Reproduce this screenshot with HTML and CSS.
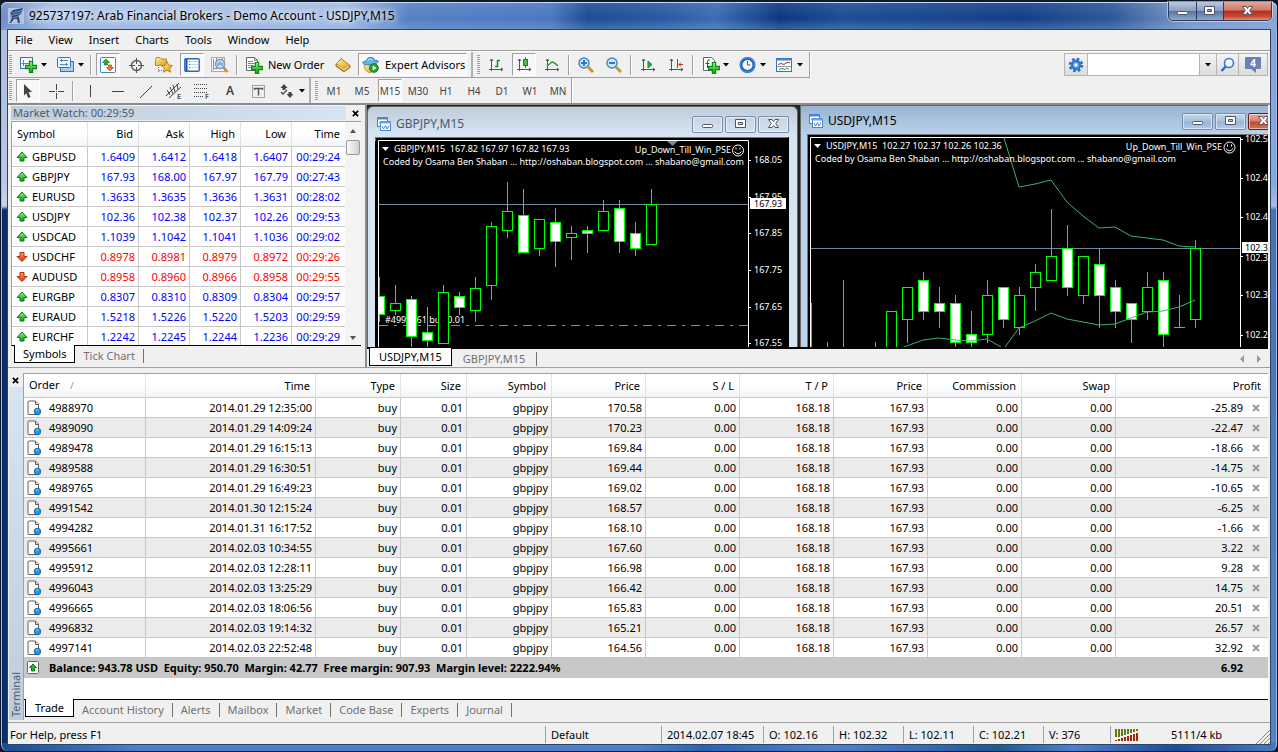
FILE: index.html
```html
<!DOCTYPE html>
<html lang="en">
<head>
<meta charset="utf-8">
<title>925737197: Arab Financial Brokers - Demo Account - USDJPY,M15</title>
<link rel="stylesheet" href="styles.css">
</head>
<body>
<svg class="defs" aria-hidden="true">
  <defs>
    <linearGradient id="gold" x1="0" y1="0" x2="1" y2="1"><stop offset="0" stop-color="#fff2a0"/><stop offset="1" stop-color="#d99a18"/></linearGradient>
    <linearGradient id="green" x1="0" y1="0" x2="0" y2="1"><stop offset="0" stop-color="#8df57e"/><stop offset="1" stop-color="#0a9c0a"/></linearGradient>
    <linearGradient id="red" x1="0" y1="0" x2="0" y2="1"><stop offset="0" stop-color="#ff9a5a"/><stop offset="1" stop-color="#d83a08"/></linearGradient>
    <symbol id="up" viewBox="0 0 12 12"><path d="M6 1 11 6.500H8V10H4V6.500H1Z" fill="url(#green)" stroke="#0b7a1c"/></symbol>
    <symbol id="down" viewBox="0 0 12 12"><path d="M6 10.500 11 5.500H8V1.500H4V5.500H1Z" fill="url(#red)" stroke="#b03010"/></symbol>
    <symbol id="doc" viewBox="0 0 16 16"><path d="M1 2Q1 1 2 1H8.500L11.500 4V14.500H2Q1 14.500 1 13.500Z" fill="#fbfbfb" stroke="#606060"/><path d="M8.500 1V4.500H11.500" fill="#ddd" stroke="#606060"/><circle cx="10.500" cy="11.500" r="3.200" fill="#1e9be8" stroke="#0d5f9e"/><path d="M9 10.500Q10 9.200 11.500 9.800" stroke="#a8defa" fill="none"/></symbol>
    <symbol id="plus" viewBox="0 0 11 11"><path d="M4 .500H7V4H10.500V7H7V10.500H4V7H.500V4H4Z" fill="url(#green)" stroke="#078a12"/></symbol>
    <symbol id="caret" viewBox="0 0 6 4"><path d="M0 0H6L3 3.500Z" fill="#000"/></symbol>
    <symbol id="axes" viewBox="0 0 16 16"><path d="M3.500 2V14M1 12.500H15M2 4 3.500 2 5 4M13 11 15 12.500 13 14" fill="none" stroke="#555"/></symbol>
    <symbol id="win" viewBox="0 0 14 14"><rect x=".500" y=".500" width="10" height="9" fill="#fff" stroke="#4a86d8"/><path d="M0 1.500H11" stroke="#4a86d8" stroke-width="2"/><path d="M2 6 4 4 5 6" fill="none" stroke="#4a86d8"/><rect x="3.500" y="4.500" width="10" height="9" fill="#fff" stroke="#4a86d8"/><path d="M3 5.500H14" stroke="#6aa4ec" stroke-width="2"/><path d="M5 9 6.500 12 8.500 8.500 10 12 12 8.500" fill="none" stroke="#4a86d8"/></symbol>
    <symbol id="min" viewBox="0 0 14 12"><rect x="1.500" y="6.500" width="10" height="3" rx="1" fill="#fff" stroke="#4f5468"/></symbol>
    <symbol id="max" viewBox="0 0 14 12"><path fill-rule="evenodd" d="M1.500 1.500H11.500V9.500H1.500ZM4.500 4.500V6.500H8.500V4.500Z" fill="#fff" stroke="#4f5468"/></symbol>
    <symbol id="close" viewBox="0 0 14 12"><path d="M1.500 1.500H5L6.500 3.500 8 1.500H11.500L8.700 5.500 11.500 9.500H8L6.500 7.500 5 9.500H1.500L4.300 5.500Z" fill="#fff" stroke="#4f5468"/></symbol>
    <symbol id="x" viewBox="0 0 8 8"><path d="M1 1 7 7M7 1 1 7" stroke="currentColor" stroke-width="2"/></symbol>
  </defs>
</svg>

<div class="frame">
  <header class="titlebar">
    <svg class="i16" viewBox="0 0 16 16"><path d="M2 5 5 2 15 0 14 3 13 6 10 8 11 9 12 15H10L9 11 6 11 3 15H1L4 10Z" fill="#274a80"/><path d="M4 5 14 2.500M3 7.500 13 5M5 10 10 8.500M2.500 5V14" stroke="#8ea6cc" stroke-width=".8" fill="none"/></svg>
    <h1 class="title">925737197: Arab Financial Brokers - Demo Account - USDJPY,M15</h1>
    <div class="winctl">
      <button class="wc wc-min" aria-label="Minimize"><svg class="ctl"><use href="#min"/></svg></button>
      <button class="wc wc-max" aria-label="Maximize"><svg class="ctl"><use href="#max"/></svg></button>
      <button class="wc wc-close" aria-label="Close"><svg class="ctl"><use href="#close"/></svg></button>
    </div>
  </header>

  <div class="client">
    <nav class="menu">
      <button>File</button><button>View</button><button>Insert</button><button>Charts</button><button>Tools</button><button>Window</button><button>Help</button>
    </nav>

    <div class="bars">
      <div class="bars-left">
        <div class="toolbar toolbar-main">
          <i class="grip"></i>
          <button class="tb dd" aria-label="New chart"><svg class="i18" viewBox="0 0 18 18"><rect x=".500" y="1.500" width="12" height="11" fill="#f4f9ff" stroke="#3a72b4"/><path d="M3.500 4V10M1.500 7.500H11M9.500 4V7" stroke="#5b87b8"/><use href="#plus" x="5" y="5" width="12" height="12"/></svg><svg class="car"><use href="#caret"/></svg></button>
          <button class="tb dd" aria-label="Profiles"><svg class="i18" viewBox="0 0 18 18"><rect x="3.500" y="5.500" width="13" height="10" fill="#a9ccf0" stroke="#3a72b4"/><rect x=".500" y="1.500" width="13" height="10" rx="1" fill="#eef6ff" stroke="#3a72b4"/><path d="M3 4.500H11M3 8.500H11M4.500 3V6M9.500 7V10" stroke="#5b87b8"/></svg><svg class="car"><use href="#caret"/></svg></button>
          <i class="sep"></i>
          <button class="tb on" aria-label="Market Watch"><svg class="i16" viewBox="0 0 16 16"><rect x=".500" y=".500" width="15" height="15" rx="1" fill="#fff" stroke="#3f82c8"/><path d="M6 2 9.500 5.500H7.500V8H4.500V5.500H2.500Z" fill="#28b428" stroke="#0b7a1c" stroke-width=".7"/><path d="M10 14 13.500 10.500H11.500V8H8.500V10.500H6.500Z" fill="#f07838" stroke="#c04010" stroke-width=".7"/></svg></button>
          <button class="tb" aria-label="Data Window"><svg class="i16" viewBox="0 0 16 16"><circle cx="8.500" cy="8.500" r="5" fill="none" stroke="#555" stroke-width="1.300"/><path d="M8.500 1V7M8.500 10V16M1 8.500H7M10 8.500H16" stroke="#555"/></svg></button>
          <button class="tb" aria-label="Navigator"><svg class="i18" viewBox="0 0 18 18"><path d="M.500 3.500Q.500 1.500 2 1.500H5L6.500 3H11.500V9.500H.500Z" fill="url(#gold)" stroke="#c08a18"/><path d="M3.500 11V17M4 14.500H8" stroke="#777" stroke-dasharray="1 1"/><path d="M12 5.500 13.700 9.200 17.500 9.600 14.700 12.200 15.500 16.200 12 14.200 8.500 16.200 9.300 12.200 6.500 9.600 10.300 9.200Z" fill="url(#gold)" stroke="#bd8414"/></svg></button>
          <button class="tb on" aria-label="Terminal"><svg class="i16" viewBox="0 0 16 16"><rect x=".800" y="1.800" width="14.400" height="12.400" rx="1" fill="#fff" stroke="#2468c8" stroke-width="1.400"/><path d="M2.500 2V14" stroke="#1c50a8" stroke-width="2"/><path d="M5 4.500H14M5 7.500H14M5 10.500H14" stroke="#c4d8f0"/><path d="M5 4.500H6M5 7.500H6M5 10.500H6" stroke="#d03010"/></svg></button>
          <button class="tb" aria-label="Strategy Tester"><svg class="i18" viewBox="0 0 18 18"><rect x=".500" y="1.500" width="13" height="14" fill="#f6f6f6" stroke="#aaa"/><path d="M2.500 3V14M5.500 2V6M11.500 2V5M2 12.500H8" stroke="#889"/><circle cx="9" cy="8" r="4.500" fill="#cfe6fb" stroke="#7898c0" stroke-width="1.500"/><path d="M7 6.500V10M9 5.500V9M11 6.500V10" stroke="#4a78b0"/><path d="M12.500 11.500 16.500 16" stroke="#c89020" stroke-width="2.500"/></svg></button>
          <i class="sep"></i>
          <button class="tb wide order"><svg class="i18" viewBox="0 0 18 18"><path d="M1.500 1.500H9.500L12.500 4.500V14.500H1.500Z" fill="#fdfdfd" stroke="#666"/><path d="M9.500 1.500V4.500H12.500M3 5.500H8M3 7.500H10M3 9.500H8M3 11.500H7" stroke="#888" fill="none"/><use href="#plus" x="6" y="6" width="12" height="12"/></svg><span>New Order</span></button>
          <button class="tb slim" aria-label="MetaEditor"><svg class="i16" viewBox="0 0 16 16"><path d="M6 1.500 15 8.500V10.500L9.500 14.500Q8.500 15 7.500 14L1 9Q0 8 1 7.500Z" fill="#c88c18" stroke="#8a5c08" stroke-width=".8"/><path d="M6 2 14.500 8.500 9.500 12 2 6.500Z" fill="url(#gold)"/><path d="M2 8 9 13 14 9.800" fill="none" stroke="#fff1b8"/></svg></button>
          <button class="tb wide on expert"><svg class="i18" viewBox="0 0 18 18"><path d="M2 8Q2 15 7 16.500 13 17 14.500 8Z" fill="url(#gold)" stroke="#c89820"/><path d="M.500 6.500Q3 4.500 4.500 5 5 1 9 1.500 12.500 1.500 12.500 4.500 15.500 4 16.500 5.500 14 9 8 9 2 9 .500 6.500Z" fill="#69b2e4" stroke="#3680b8"/><path d="M5.500 4Q8 2 11 4" stroke="#c6e6fa" fill="none"/><circle cx="12" cy="12" r="4.300" fill="#22a832" stroke="#0c7818"/><path d="M10.700 9.500 14.500 12 10.700 14.500Z" fill="#fff"/></svg><span>Expert Advisors</span></button>
          <i class="sep sep-group"></i>
          <i class="grip"></i>
          <button class="tb" aria-label="Bar chart"><svg class="i16" viewBox="0 0 16 16"><use href="#axes" width="16" height="16"/><path d="M9.500 10V3M9.500 3.500H12M7 9.500H9.500" stroke="#118a22" stroke-width="1.500"/></svg></button>
          <button class="tb on" aria-label="Candlesticks"><svg class="i16" viewBox="0 0 16 16"><use href="#axes" width="16" height="16"/><path d="M9.500 0V11" stroke="#118a22"/><rect x="7.500" y="2.500" width="4" height="6" fill="#3cc848" stroke="#118a22"/></svg></button>
          <button class="tb" aria-label="Line chart"><svg class="i16" viewBox="0 0 16 16"><use href="#axes" width="16" height="16"/><path d="M3 9 8 5Q10 5 14 9" stroke="#2a9a3a" fill="none" stroke-width="1.300"/></svg></button>
          <i class="sep"></i>
          <button class="tb" aria-label="Zoom in"><svg class="i16" viewBox="0 0 16 16"><path d="M10 10 15 15" stroke="#c89a20" stroke-width="3"/><circle cx="6" cy="6" r="5" fill="#cbe9fb" stroke="#4a86c8" stroke-width="1.500"/><path d="M6 3V9M3 6H9" stroke="#3478b8" stroke-width="2"/></svg></button>
          <button class="tb" aria-label="Zoom out"><svg class="i16" viewBox="0 0 16 16"><path d="M10 10 15 15" stroke="#c89a20" stroke-width="3"/><circle cx="6" cy="6" r="5" fill="#cbe9fb" stroke="#4a86c8" stroke-width="1.500"/><path d="M3 6H9" stroke="#3478b8" stroke-width="2"/></svg></button>
          <i class="sep"></i>
          <button class="tb" aria-label="Auto scroll"><svg class="i16" viewBox="0 0 16 16"><use href="#axes" width="16" height="16"/><path d="M8 4 12 7.500 8 11Z" fill="#28b838" stroke="#118a22"/></svg></button>
          <button class="tb" aria-label="Chart shift"><svg class="i16" viewBox="0 0 16 16"><use href="#axes" width="16" height="16"/><path d="M9.500 2V11" stroke="#2468a8"/><path d="M15 7.500H11M13 5.500 11 7.500 13 9.500" stroke="#b83010" fill="none"/></svg></button>
          <i class="sep"></i>
          <button class="tb dd" aria-label="Indicators"><svg class="i18" viewBox="0 0 18 18"><path d="M1.500 1.500H9.500L12.500 4.500V14.500H1.500Z" fill="#fdfdfd" stroke="#666"/><path d="M8 4Q5.500 3 5.500 6V12M3.500 7.500H7.500" stroke="#446" fill="none"/><use href="#plus" x="6" y="6" width="12" height="12"/></svg><svg class="car"><use href="#caret"/></svg></button>
          <button class="tb dd" aria-label="Periods"><svg class="i18" viewBox="0 0 18 18"><circle cx="8.500" cy="9" r="6.500" fill="#f4f8fc" stroke="#1c62b8" stroke-width="3"/><circle cx="8.500" cy="9" r="7" fill="none" stroke="#5aa4ec" stroke-width=".8"/><path d="M8.500 5V9H11.500" stroke="#555" fill="none"/></svg><svg class="car"><use href="#caret"/></svg></button>
          <button class="tb dd" aria-label="Templates"><svg class="i18" viewBox="0 0 18 18"><rect x=".500" y="2.500" width="15" height="13" fill="#fff" stroke="#3a72b4"/><path d="M0 3.500H16" stroke="#3f82d0" stroke-width="2"/><path d="M1 10.500H15" stroke="#7aa0c8"/><path d="M2 8.500 5 7.500 8 8.500 11 6.500 14 6.500" stroke="#b83010" fill="none"/><path d="M3 13.500 6 12.500 9 13.500 11 12 13 13.500" stroke="#2a9a3a" fill="none"/></svg><svg class="car"><use href="#caret"/></svg></button>
        </div>
        <div class="toolbar toolbar-line">
          <i class="grip"></i>
          <button class="tb on" aria-label="Cursor"><svg class="i16" viewBox="0 0 16 16"><path d="M4 1 12 9 8.500 9.200 10.500 14 8.200 15 6.300 10.200 4 12.500Z" fill="#444"/></svg></button>
          <button class="tb" aria-label="Crosshair"><svg class="i16" viewBox="0 0 16 16"><path d="M8.500 1V7M8.500 10V16M1 8.500H7M10 8.500H16M8 8.500H9" stroke="#444"/></svg></button>
          <i class="sep"></i>
          <button class="tb" aria-label="Vertical line"><svg class="i16" viewBox="0 0 16 16"><path d="M8.500 2V14" stroke="#444"/></svg></button>
          <button class="tb" aria-label="Horizontal line"><svg class="i16" viewBox="0 0 16 16"><path d="M2 8.500H14" stroke="#444"/></svg></button>
          <button class="tb" aria-label="Trendline"><svg class="i16" viewBox="0 0 16 16"><path d="M2 15 14 3" stroke="#444"/></svg></button>
          <button class="tb" aria-label="Equidistant channel"><svg class="i18" viewBox="0 0 18 18"><path d="M1 14 14 1M4 16 16 5M2 8 5 13M5 5 8 12M8 3 10 10M12 2 13 8" stroke="#444" fill="none"/><text x="12" y="17" class="sub">E</text></svg></button>
          <button class="tb" aria-label="Fibonacci"><svg class="i18" viewBox="0 0 18 18"><path d="M1 2.500H15M1 6.500H15M1 10.500H15M1 14.500H10" stroke="#444" stroke-dasharray="1 1"/><text x="12" y="17" class="sub">F</text></svg></button>
          <button class="tb letter">A</button>
          <button class="tb" aria-label="Text label"><svg class="i16" viewBox="0 0 16 16"><rect x="2.500" y="2.500" width="12" height="12" fill="none" stroke="#555" stroke-dasharray="1 1"/><path d="M4.500 7V5.500H12.500V7M8.500 5.500V12.500" stroke="#555" stroke-width="1.500" fill="none"/></svg></button>
          <button class="tb dd" aria-label="Arrows"><svg class="i18" viewBox="0 0 18 18"><path d="M6 2 9.500 6H2.500ZM4.500 6H7.500V8H4.500ZM12 16 8.500 12H15.500ZM10.500 10H13.500V12H10.500Z" fill="#444"/><path d="M3 10 5 12 9 8" stroke="#444" fill="none" stroke-width="1.300"/></svg><svg class="car"><use href="#caret"/></svg></button>
          <i class="sep sep-group"></i>
          <i class="grip"></i>
          <button class="tb tf">M1</button><button class="tb tf">M5</button><button class="tb tf on">M15</button><button class="tb tf">M30</button><button class="tb tf">H1</button><button class="tb tf">H4</button><button class="tb tf">D1</button><button class="tb tf">W1</button><button class="tb tf">MN</button>
        </div>
      </div>
      <form class="search">
        <button type="button" class="sb" aria-label="Search options"><svg class="i16" viewBox="0 0 16 16"><circle cx="8" cy="8" r="6" fill="none" stroke="#2a66c0" stroke-width="2.500" stroke-dasharray="2.600 2.110"/><circle cx="8" cy="8" r="4" fill="#8abcf4" stroke="#2f74d0" stroke-width="2.500"/><circle cx="8" cy="8" r="1.300" fill="#fff"/></svg></button>
        <input type="text" class="sinput" aria-label="Search">
        <button type="button" class="sb sb-car" aria-label="History"><svg class="car"><use href="#caret"/></svg></button>
        <button type="button" class="sb" aria-label="Find"><svg class="i16" viewBox="0 0 16 16"><path d="M6 9 1.500 14" stroke="#3568c8" stroke-width="2.500"/><circle cx="9" cy="6" r="4.500" fill="#f4f8ff" stroke="#3f74d8" stroke-width="1.600"/></svg></button>
        <button type="button" class="sb sb-msg" aria-label="Messages"><span class="bubble">4</span><svg class="tail" viewBox="0 0 5 4"><path d="M0 0H5V4Z" fill="#6884b4"/></svg></button>
      </form>
    </div>

    <div class="work">
      <section class="market">
        <div class="panel-head"><h2 class="panel-title">Market Watch: 00:29:59</h2><button class="px" aria-label="Close"><svg class="i8"><use href="#x"/></svg></button></div>
        <div class="market-body">
          <table class="quotes">
            <colgroup><col class="q1"><col class="q2"><col class="q2"><col class="q2"><col class="q2"><col></colgroup>
            <thead><tr><th>Symbol</th><th>Bid</th><th>Ask</th><th>High</th><th>Low</th><th>Time</th></tr></thead>
            <tbody>
              <tr><td><svg class="i12"><use href="#up"/></svg>GBPUSD</td><td>1.6409</td><td>1.6412</td><td>1.6418</td><td>1.6407</td><td>00:29:24</td></tr>
              <tr><td><svg class="i12"><use href="#up"/></svg>GBPJPY</td><td>167.93</td><td>168.00</td><td>167.97</td><td>167.79</td><td>00:27:43</td></tr>
              <tr><td><svg class="i12"><use href="#up"/></svg>EURUSD</td><td>1.3633</td><td>1.3635</td><td>1.3636</td><td>1.3631</td><td>00:28:02</td></tr>
              <tr><td><svg class="i12"><use href="#up"/></svg>USDJPY</td><td>102.36</td><td>102.38</td><td>102.37</td><td>102.26</td><td>00:29:53</td></tr>
              <tr><td><svg class="i12"><use href="#up"/></svg>USDCAD</td><td>1.1039</td><td>1.1042</td><td>1.1041</td><td>1.1036</td><td>00:29:02</td></tr>
              <tr class="dn"><td><svg class="i12"><use href="#down"/></svg>USDCHF</td><td>0.8978</td><td>0.8981</td><td>0.8979</td><td>0.8972</td><td>00:29:26</td></tr>
              <tr class="dn"><td><svg class="i12"><use href="#down"/></svg>AUDUSD</td><td>0.8958</td><td>0.8960</td><td>0.8966</td><td>0.8958</td><td>00:29:55</td></tr>
              <tr><td><svg class="i12"><use href="#up"/></svg>EURGBP</td><td>0.8307</td><td>0.8310</td><td>0.8309</td><td>0.8304</td><td>00:29:57</td></tr>
              <tr><td><svg class="i12"><use href="#up"/></svg>EURAUD</td><td>1.5218</td><td>1.5226</td><td>1.5220</td><td>1.5203</td><td>00:29:59</td></tr>
              <tr><td><svg class="i12"><use href="#up"/></svg>EURCHF</td><td>1.2242</td><td>1.2245</td><td>1.2244</td><td>1.2236</td><td>00:29:29</td></tr>
            </tbody>
          </table>
          <div class="scroll"><svg class="arr" viewBox="0 0 6 4"><path d="M0 4H6L3 0Z" fill="#555"/></svg><i class="thumb"></i><svg class="arr arr-end" viewBox="0 0 6 4"><path d="M0 0H6L3 4Z" fill="#555"/></svg></div>
        </div>
        <nav class="tabs tabs-market"><button class="tab active">Symbols</button><button class="tab">Tick Chart</button></nav>
      </section>

      <section class="mdi">
        <div class="desk">
          <div class="cw cw-back">
            <div class="cw-head"><svg class="i14"><use href="#win"/></svg><h2 class="cw-title">GBPJPY,M15</h2>
              <button class="cc" aria-label="Minimize"><svg class="ctl"><use href="#min"/></svg></button><button class="cc" aria-label="Maximize"><svg class="ctl"><use href="#max"/></svg></button><button class="cc" aria-label="Close"><svg class="ctl"><use href="#close"/></svg></button></div>
            <svg class="chart" width="414" height="210" viewBox="375 137 414 210">
              <rect x="375" y="137" width="414" height="210" fill="#000"/>
              <path d="M375.500 347V137.500H788" stroke="#777" fill="none"/>
              <path d="M667 141H678L672.500 146Z" fill="#778899"/>
              <path d="M379 204.500H748" stroke="#778899"/>
              <path d="M379 325.500H748" stroke="#32cd32" stroke-dasharray="9 6 3 6"/>
              <text x="385" y="323" class="ct">#4995661 buy 0.01</text>
              <g class="cs">
                <path d="M379.500 277V322M395.500 285V315M411.500 296V347M427.500 307V347M443.500 285V292M459.500 292V315M475.500 277V322M491.500 222V300M507.500 182V238M523.500 189V253M539.500 219V256M555.500 208V267M571.500 226V260M587.500 226V253M603.500 200V231M619.500 200V253M635.500 222V256M651.500 189V245"/>
                <g class="hollow"><rect x="390.500" y="303.500" width="10" height="7"/><rect x="438.500" y="292.500" width="10" height="51"/><rect x="470.500" y="288.500" width="10" height="22"/><rect x="486.500" y="226.500" width="10" height="59"/><rect x="502.500" y="211.500" width="10" height="19"/><rect x="534.500" y="219.500" width="10" height="29"/><rect x="566.500" y="233.500" width="10" height="4"/><rect x="598.500" y="211.500" width="10" height="19"/><rect x="646.500" y="204.500" width="10" height="40"/></g>
                <g class="solid"><rect x="374.500" y="296.500" width="10" height="18"/><rect x="406.500" y="299.500" width="10" height="37"/><rect x="422.500" y="332.500" width="10" height="8"/><rect x="454.500" y="296.500" width="10" height="11"/><rect x="518.500" y="215.500" width="10" height="37"/><rect x="550.500" y="222.500" width="10" height="19"/><rect x="582.500" y="230.500" width="10" height="3"/><rect x="614.500" y="208.500" width="10" height="33"/><rect x="630.500" y="233.500" width="10" height="15"/></g>
              </g>
              <rect x="374" y="141" width="4" height="206" fill="#000"/>
              <path d="M378.500 347V140.500H748.500V347M748 160.500H751M748 197.500H751M748 233.500H751M748 270.500H751M748 307.500H751M748 343.500H751" stroke="#fff" fill="none"/>
              <path d="M382 147H389L385.500 151Z" fill="#fff"/>
              <text x="394" y="152" class="ct">GBPJPY,M15&#160; 167.82 167.97 167.82 167.93</text>
              <text x="383" y="165" class="ct">Coded by Osama Ben Shaban ... http://oshaban.blogspot.com ... shabano@gmail.com</text>
              <text x="731" y="153" class="ct end">Up_Down_Till_Win_PSE</text>
              <circle cx="738" cy="150.500" r="5.500" fill="none" stroke="#fff"/><path d="M736 147.500V149.500M740 147.500V149.500M734.500 151.500Q738 156 741.500 151.500" stroke="#fff" fill="none"/>
              <text x="754" y="163" class="ct">168.05</text><text x="754" y="200" class="ct">167.95</text><text x="754" y="236" class="ct">167.85</text><text x="754" y="273" class="ct">167.75</text><text x="754" y="310" class="ct">167.65</text><text x="754" y="346" class="ct">167.55</text>
              <rect x="750" y="198" width="36" height="11" fill="#fff"/><text x="754" y="207" class="ct dark">167.93</text>
            </svg>
          </div>
          <div class="cw cw-front">
            <div class="cw-head"><svg class="i14"><use href="#win"/></svg><h2 class="cw-title">USDJPY,M15</h2>
              <button class="cc" aria-label="Minimize"><svg class="ctl"><use href="#min"/></svg></button><button class="cc" aria-label="Maximize"><svg class="ctl"><use href="#max"/></svg></button><button class="cc cc-red" aria-label="Close"><svg class="ctl"><use href="#close"/></svg></button></div>
            <svg class="chart" width="461" height="213" viewBox="807 134 461 213">
              <rect x="807" y="134" width="461" height="213" fill="#000"/>
              <path d="M807.500 347V134.500H1268" stroke="#777" fill="none"/>
              <path d="M811 248.500H1240" stroke="#778899"/>
              <g class="cs">
                <path d="M811.500 303V347M827.500 342V347M843.500 280V347M875.500 342V347M907.500 287V343M923.500 272V320M939.500 287V328M955.500 295V347M971.500 311V347M987.500 280V343M1003.500 287V328M1019.500 287V335M1035.500 264V311M1051.500 209V280M1067.500 225V296M1083.500 256V304M1099.500 248V328M1115.500 280V328M1131.500 303V343M1147.500 272V320M1163.500 272V347M1179.500 295V327M1174 327.500H1185M1195.500 240V328"/>
                <g class="hollow"><rect x="886.500" y="311.500" width="10" height="50"/><rect x="902.500" y="287.500" width="10" height="32"/><rect x="982.500" y="295.500" width="10" height="39"/><rect x="1014.500" y="295.500" width="10" height="32"/><rect x="1030.500" y="272.500" width="10" height="15"/><rect x="1046.500" y="256.500" width="10" height="24"/><rect x="1078.500" y="256.500" width="10" height="39"/><rect x="1142.500" y="287.500" width="10" height="24"/><rect x="1190.500" y="248.500" width="10" height="71"/></g>
                <g class="solid"><rect x="918.500" y="280.500" width="10" height="31"/><rect x="934.500" y="303.500" width="10" height="8"/><rect x="950.500" y="303.500" width="10" height="39"/><rect x="966.500" y="334.500" width="10" height="8"/><rect x="998.500" y="287.500" width="10" height="32"/><rect x="1062.500" y="248.500" width="10" height="39"/><rect x="1094.500" y="264.500" width="10" height="31"/><rect x="1110.500" y="287.500" width="10" height="24"/><rect x="1126.500" y="303.500" width="10" height="16"/><rect x="1158.500" y="280.500" width="10" height="54"/></g>
              </g>
              <path class="band" d="M1004 138 1019 187 1035 184 1051 180 1067 202 1083 216 1099 228 1115 227 1131 236 1147 238 1163 240 1179 246 1195 247M904 347 923 340 939 338 955 340 971 341 987 339 1001 347M1005 347 1019 328 1035 321 1051 313 1067 319 1083 322 1099 325 1115 324 1131 318 1147 312 1163 311 1179 307 1195 300"/>
              <path d="M810.500 347V137.500H1240.500V347M1240 139.500H1243M1240 178.500H1243M1240 217.500H1243M1240 256.500H1243M1240 295.500H1243M1240 335.500H1243" stroke="#fff" fill="none"/>
              <path d="M814 144H821L817.500 148Z" fill="#fff"/>
              <text x="826" y="149" class="ct">USDJPY,M15&#160; 102.27 102.37 102.26 102.36</text>
              <text x="815" y="162" class="ct">Coded by Osama Ben Shaban ... http://oshaban.blogspot.com ... shabano@gmail.com</text>
              <text x="1222" y="150" class="ct end">Up_Down_Till_Win_PSE</text>
              <circle cx="1229.500" cy="147.500" r="5.500" fill="none" stroke="#fff"/><path d="M1227.500 144.500V146.500M1231.500 144.500V146.500M1226 148.500Q1229.500 153 1233 148.500" stroke="#fff" fill="none"/>
              <text x="1245" y="142" class="ct">102.5</text><text x="1245" y="181" class="ct">102.4</text><text x="1245" y="220" class="ct">102.4</text><text x="1245" y="261" class="ct">102.3</text><text x="1245" y="298" class="ct">102.3</text><text x="1245" y="338" class="ct">102.2</text>
              <rect x="1242" y="242" width="26" height="11" fill="#fff"/><text x="1245" y="251" class="ct dark">102.3</text>
            </svg>
          </div>
        </div>
        <nav class="tabs tabs-mdi"><button class="tab active">USDJPY,M15</button><button class="tab">GBPJPY,M15</button>
          <svg class="pager" width="24" height="8" viewBox="0 0 24 8"><path d="M4 0V8L0 4ZM17 0V8L21 4Z" fill="#999"/></svg></nav>
      </section>
    </div>

    <section class="terminal">
      <div class="side"><button class="px" aria-label="Close"><svg class="i8"><use href="#x"/></svg></button><div class="strip"><h2 class="strip-title">Terminal</h2></div></div>
      <div class="term-main">
        <table class="orders">
          <colgroup><col class="c122"><col class="c170"><col class="c85"><col class="c66"><col class="c85"><col class="c94"><col class="c94"><col class="c94"><col class="c94"><col class="c94"><col class="c94"><col></colgroup>
          <thead><tr><th>Order <span class="sort">/</span></th><th>Time</th><th>Type</th><th>Size</th><th>Symbol</th><th>Price</th><th>S / L</th><th>T / P</th><th>Price</th><th>Commission</th><th>Swap</th><th>Profit</th></tr></thead>
          <tbody>
            <tr><td><svg class="i16"><use href="#doc"/></svg>4988970</td><td>2014.01.29 12:35:00</td><td>buy</td><td>0.01</td><td>gbpjpy</td><td>170.58</td><td>0.00</td><td>168.18</td><td>167.93</td><td>0.00</td><td>0.00</td><td>-25.89<button class="del" aria-label="Close order"><svg class="i8"><use href="#x"/></svg></button></td></tr>
            <tr><td><svg class="i16"><use href="#doc"/></svg>4989090</td><td>2014.01.29 14:09:24</td><td>buy</td><td>0.01</td><td>gbpjpy</td><td>170.23</td><td>0.00</td><td>168.18</td><td>167.93</td><td>0.00</td><td>0.00</td><td>-22.47<button class="del" aria-label="Close order"><svg class="i8"><use href="#x"/></svg></button></td></tr>
            <tr><td><svg class="i16"><use href="#doc"/></svg>4989478</td><td>2014.01.29 16:15:13</td><td>buy</td><td>0.01</td><td>gbpjpy</td><td>169.84</td><td>0.00</td><td>168.18</td><td>167.93</td><td>0.00</td><td>0.00</td><td>-18.66<button class="del" aria-label="Close order"><svg class="i8"><use href="#x"/></svg></button></td></tr>
            <tr><td><svg class="i16"><use href="#doc"/></svg>4989588</td><td>2014.01.29 16:30:51</td><td>buy</td><td>0.01</td><td>gbpjpy</td><td>169.44</td><td>0.00</td><td>168.18</td><td>167.93</td><td>0.00</td><td>0.00</td><td>-14.75<button class="del" aria-label="Close order"><svg class="i8"><use href="#x"/></svg></button></td></tr>
            <tr><td><svg class="i16"><use href="#doc"/></svg>4989765</td><td>2014.01.29 16:49:23</td><td>buy</td><td>0.01</td><td>gbpjpy</td><td>169.02</td><td>0.00</td><td>168.18</td><td>167.93</td><td>0.00</td><td>0.00</td><td>-10.65<button class="del" aria-label="Close order"><svg class="i8"><use href="#x"/></svg></button></td></tr>
            <tr><td><svg class="i16"><use href="#doc"/></svg>4991542</td><td>2014.01.30 12:15:24</td><td>buy</td><td>0.01</td><td>gbpjpy</td><td>168.57</td><td>0.00</td><td>168.18</td><td>167.93</td><td>0.00</td><td>0.00</td><td>-6.25<button class="del" aria-label="Close order"><svg class="i8"><use href="#x"/></svg></button></td></tr>
            <tr><td><svg class="i16"><use href="#doc"/></svg>4994282</td><td>2014.01.31 16:17:52</td><td>buy</td><td>0.01</td><td>gbpjpy</td><td>168.10</td><td>0.00</td><td>168.18</td><td>167.93</td><td>0.00</td><td>0.00</td><td>-1.66<button class="del" aria-label="Close order"><svg class="i8"><use href="#x"/></svg></button></td></tr>
            <tr><td><svg class="i16"><use href="#doc"/></svg>4995661</td><td>2014.02.03 10:34:55</td><td>buy</td><td>0.01</td><td>gbpjpy</td><td>167.60</td><td>0.00</td><td>168.18</td><td>167.93</td><td>0.00</td><td>0.00</td><td>3.22<button class="del" aria-label="Close order"><svg class="i8"><use href="#x"/></svg></button></td></tr>
            <tr><td><svg class="i16"><use href="#doc"/></svg>4995912</td><td>2014.02.03 12:28:11</td><td>buy</td><td>0.01</td><td>gbpjpy</td><td>166.98</td><td>0.00</td><td>168.18</td><td>167.93</td><td>0.00</td><td>0.00</td><td>9.28<button class="del" aria-label="Close order"><svg class="i8"><use href="#x"/></svg></button></td></tr>
            <tr><td><svg class="i16"><use href="#doc"/></svg>4996043</td><td>2014.02.03 13:25:29</td><td>buy</td><td>0.01</td><td>gbpjpy</td><td>166.42</td><td>0.00</td><td>168.18</td><td>167.93</td><td>0.00</td><td>0.00</td><td>14.75<button class="del" aria-label="Close order"><svg class="i8"><use href="#x"/></svg></button></td></tr>
            <tr><td><svg class="i16"><use href="#doc"/></svg>4996665</td><td>2014.02.03 18:06:56</td><td>buy</td><td>0.01</td><td>gbpjpy</td><td>165.83</td><td>0.00</td><td>168.18</td><td>167.93</td><td>0.00</td><td>0.00</td><td>20.51<button class="del" aria-label="Close order"><svg class="i8"><use href="#x"/></svg></button></td></tr>
            <tr><td><svg class="i16"><use href="#doc"/></svg>4996832</td><td>2014.02.03 19:14:32</td><td>buy</td><td>0.01</td><td>gbpjpy</td><td>165.21</td><td>0.00</td><td>168.18</td><td>167.93</td><td>0.00</td><td>0.00</td><td>26.57<button class="del" aria-label="Close order"><svg class="i8"><use href="#x"/></svg></button></td></tr>
            <tr><td><svg class="i16"><use href="#doc"/></svg>4997141</td><td>2014.02.03 22:52:48</td><td>buy</td><td>0.01</td><td>gbpjpy</td><td>164.56</td><td>0.00</td><td>168.18</td><td>167.93</td><td>0.00</td><td>0.00</td><td>32.92<button class="del" aria-label="Close order"><svg class="i8"><use href="#x"/></svg></button></td></tr>
          </tbody>
          <tfoot><tr><td colspan="11"><svg class="i16" viewBox="0 0 16 16"><rect x=".500" y="1.500" width="11" height="12" rx="1" fill="#fff" stroke="#666"/><path d="M6 4 9.500 7.500H7.500V11H4.500V7.500H2.500Z" fill="#28b428" stroke="#0b7a1c"/></svg>Balance: 943.78 USD&#160; Equity: 950.70&#160; Margin: 42.77&#160; Free margin: 907.93&#160; Margin level: 2222.94%</td><td>6.92</td></tr></tfoot>
        </table>
        <nav class="tabs tabs-term"><button class="tab active">Trade</button><button class="tab">Account History</button><button class="tab">Alerts</button><button class="tab">Mailbox</button><button class="tab">Market</button><button class="tab">Code Base</button><button class="tab">Experts</button><button class="tab">Journal</button></nav>
      </div>
    </section>

    <footer class="status">
      <span class="st st-help">For Help, press F1</span><span class="st st-prof">Default</span><span class="st st-date">2014.02.07 18:45</span><span class="st st-val">O: 102.16</span><span class="st st-val">H: 102.32</span><span class="st st-val">L: 102.11</span><span class="st st-val">C: 102.21</span><span class="st st-vol">V: 376</span>
      <span class="st st-net"><svg width="24" height="14" viewBox="0 0 24 14"><path d="M1 1V9M4 1V9M7 1V8M10 1V7M13 1V6M16 1V5M19 1V4M22 1V3" stroke="#5c8010" stroke-width="2"/><path d="M1 12V13M4 11V13M7 10V13M10 9V13M13 8V13M16 7V13M19 6V13M22 5V13" stroke="#a02808" stroke-width="2"/></svg>5111/4 kb</span>
      <svg class="sizer" width="14" height="14" viewBox="0 0 14 14"><path d="M0 14 14 0M4 14 14 4M8 14 14 8M12 14 14 12" stroke="#888"/></svg>
    </footer>
  </div>
</div>
</body>
</html>
```
FILE: styles.css
```css
* { box-sizing: border-box; }

body {
  margin: 0;
  background: #101828;
  color: #000;
  font: 11px/14px "Noto Sans", "Open Sans", sans-serif;
}

h1, h2 { margin: 0; font-size: 12px; font-weight: 400; }

button {
  margin: 0;
  padding: 0;
  border: 0;
  background: none;
  color: inherit;
  font: inherit;
}

svg { display: block; flex: none; }

.defs { position: absolute; width: 0; height: 0; }
.i8 { width: 8px; height: 8px; }
.i12 { width: 12px; height: 12px; }
.i14 { width: 14px; height: 14px; }
.i16 { width: 16px; height: 16px; }
.i18 { width: 18px; height: 18px; }
.ctl { width: 14px; height: 12px; }
.car { width: 6px; height: 4px; }

/* Window frame */
.frame {
  display: flex;
  flex-direction: column;
  min-height: 100vh;
  padding: 0 7px 7px;
  border: 1px solid #10182c;
  border-width: 2px 1px 1px;
  border-radius: 7px;
  background:
    linear-gradient(90deg, #1b4c90, #5080c8 11% 50%, #2a64b0 55%, #5080c8 65%, #3a6cb4 72%, #205890 78%, #5080c8 84%, #1e4c98 92%, #4a78bc) bottom / 100% 8px no-repeat,
    linear-gradient(#a8bce0, #b8c8e4 180px, #c8d4ea 204px, #0a2c68 208px, #08306c) left / 8px 100% no-repeat,
    linear-gradient(#8aa4d0, #88a8dc 180px, #a8bce0 204px, #4474b8 208px, #5484c8) right / 8px 100% no-repeat,
    #2456a0;
  box-shadow: inset 0 1px #c8dcf4, inset 1px 0 #9cb8e0, inset -1px 0 #9cb8e0;
}

.titlebar {
  display: flex;
  align-items: center;
  gap: 5px;
  height: 28px;
  margin: 0 -7px;
  padding-left: 7px;
  border-radius: 6px 6px 0 0;
  background:
    linear-gradient(rgba(255, 255, 255, .1), transparent 60%, rgba(140, 180, 230, .35)),
    linear-gradient(90deg, #6c8cc4, #a9c0e4 4%, #a4bce2 27%, #5680c4 32%, #4b78c0 43%, #1e4c92 46%, #285aa2 52%, #3c6cb0 56%, #0c3880 61%, #1c4c94 66%, #143f86 80%, #2c5698 87%, #7c98c8 93%, #8ca4d0);
  box-shadow: inset 0 1px #c8dcf4;
}

.titlebar > .i16 { background: #b4c4de; }
.title { text-shadow: 0 0 6px #fff, 0 0 6px #fff; }

.winctl {
  display: flex;
  align-self: flex-start;
  margin: 0 5px 0 auto;
  border: 1px solid #2c3c60;
  border-top: 0;
  border-radius: 0 0 5px 5px;
  box-shadow: 0 0 0 1px rgba(220, 232, 250, .6);
  overflow: hidden;
}

.wc {
  display: grid;
  place-items: center;
  width: 28px;
  height: 18px;
  border-right: 1px solid #2c3c60;
  background: linear-gradient(#b8c8e0, #8ca0c4 48%, #5c749c 52%, #8ca8d0);
}

.wc-max { width: 27px; }
.wc-close { width: 47px; border-right: 0; background: linear-gradient(#e0a898, #d07868 45%, #b03020 50%, #c84830 80%, #e09070); }

.client {
  display: flex;
  flex: 1;
  flex-direction: column;
  background: #f0f0f0;
  box-shadow: 0 0 0 1px #2c4468;
}

/* Menu and toolbars */
.menu {
  display: flex;
  gap: 16px;
  height: 21px;
  padding: 0 7px;
  border-bottom: 1px solid #a0a0a0;
}

.bars {
  display: flex;
  justify-content: space-between;
  border-top: 1px solid #fff;
  border-bottom: 2px solid #8c8c8c;
}

.toolbar {
  display: flex;
  align-items: center;
  gap: 4px;
  width: max-content;
  height: 26px;
  padding: 0 4px 0 1px;
  border-right: 1px solid #a0a0a0;
  box-shadow: 1px 0 #fff;
}

.toolbar-main { border-bottom: 1px solid #a0a0a0; }
.toolbar-line { height: 25px; padding-right: 1px; }

.grip {
  width: 3px;
  height: 19px;
  background: repeating-linear-gradient(#a0a0a0 0 1px, #f0f0f0 1px 2px);
}

.sep { width: 2px; height: 20px; border-left: 1px solid #a0a0a0; background: #fff; }
.sep-group { height: 25px; border-left-width: 2px; border-color: #b0b0b0; }

.tb {
  display: flex;
  flex: none;
  align-items: center;
  justify-content: center;
  width: 24px;
  height: 23px;
}

.on {
  border: 1px solid;
  border-color: #a0a0a0 #fff #fff #a0a0a0;
  background: #f8f8f8;
}

.dd { width: 33px; gap: 3px; justify-content: flex-start; padding-left: 4px; }
.slim { width: 22px; }
.wide { justify-content: flex-start; gap: 5px; padding-left: 3px; white-space: nowrap; }
.order { width: 86px; }
.expert { width: 109px; }
.tf, .letter { color: #444; font-size: 10px; }
.letter { font-size: 12px; font-weight: 600; }
.sub { fill: #444; font: 600 7px "Noto Sans", sans-serif; }

/* Timeframe buttons sit closer to the grip than the drawing tools do */
.toolbar-line .sep-group { margin-left: -2px; }

.search {
  display: flex;
  align-self: flex-start;
  height: 23px;
  margin: 1px 2px 0 0;
  border: 1px solid #b4b4b4;
}

.sb {
  display: grid;
  place-items: center;
  width: 22px;
  background: linear-gradient(#f4f4f4, #dcdcdc);
}

.sb + .sb { border-left: 1px solid #b4b4b4; }
.sb-car { width: 16px; }
.sb-msg { width: 29px; align-content: center; }
.sinput { width: 113px; padding: 0 4px; border: 0; border-inline: 1px solid #b4b4b4; background: #fff; font: inherit; }

.bubble {
  width: 16px;
  height: 12px;
  border-radius: 1px;
  background: #6884b4;
  color: #fff;
  font: 700 10px/12px "Noto Sans", sans-serif;
}
.tail { width: 5px; height: 4px; }

/* Market watch */
.work { display: flex; }

.market {
  width: 359px;
  flex: none;
  padding: 1px 4px 0 3px;
  border-right: 2px solid #8c8c8c;
  border-bottom: 1px solid #a0a0a0;
}

.panel-head { display: flex; gap: 3px; height: 15px; color: #4a5a6c; }
.panel-title { flex: 1; height: 14px; background: linear-gradient(90deg, #bfcddb, #d7e4f2); font-size: 11px; line-height: 14px; padding-left: 2px; }
.px { display: grid; place-items: center; width: 12px; height: 14px; color: #000; }
.px .i8 { width: 7px; height: 7px; }

.market-body { display: flex; border: 1px solid #a0a0a0; border-bottom: 1px solid #000; border-right: 0; background: #fff; height: 225px; overflow: hidden; }

table { border-collapse: separate; border-spacing: 0; table-layout: fixed; }
th { font-weight: 400; }
th, td { padding: 0 3px; text-align: right; white-space: nowrap; }
th:first-child, td:first-child { text-align: left; }

.quotes { width: 333px; }
.q1 { width: 76px; }
.q2 { width: 51px; }
.quotes th { height: 25px; padding: 0 5px; border-bottom: 1px solid #c8c8c8; border-right: 1px solid #e4e4e8; background: linear-gradient(#fff 45%, #f2f4f6); }
.quotes td { height: 20px; border-right: 1px solid #c8c8c8; border-bottom: 1px solid #c8c8c8; color: #00f; }
.quotes td:last-child, .quotes th:last-child { border-right: 0; }
.quotes td:last-child { padding-right: 5px; }
.quotes .dn td { color: #f00; }
.quotes tbody td:first-child { padding-left: 4px; color: #000; }
td svg { display: inline-block; vertical-align: top; }
.quotes td svg { margin: 1px 4px 1px 0; }

.scroll { display: flex; flex: 1; flex-direction: column; align-items: center; padding: 7px 1px 5px; background: #f4f4f4; }
.arr { width: 6px; height: 4px; }
.arr-end { margin-top: auto; }
.thumb { width: 14px; height: 15px; margin-top: 7px; border: 1px solid #989898; border-radius: 2px; background: linear-gradient(90deg, #fafafa, #d0d0d0); }

/* Tabs */
.tabs { display: flex; align-items: flex-start; height: 19px; }
.tab { height: 14px; margin-top: 3px; padding: 0 8px; border-right: 1px solid #707070; color: #707070; line-height: 14px; }
.active { height: 18px; margin: -1px 0 0; padding: 0 9px; border: 1px solid #000; border-top: 0; background: #fff; color: #000; line-height: 17px; }
.tabs-market { padding-left: 3px; height: 21px; }
.tabs-market .active { padding: 0 8px; }
.tabs-mdi .tab:not(.active) { padding: 0 11px; }

/* Chart windows */
.mdi { flex: 1; min-width: 0; padding-right: 2px; border-bottom: 1px solid #a0a0a0; }
.desk { position: relative; height: 242px; overflow: hidden; background: #222; }
.cw { position: absolute; border: 1px solid #666; border-bottom: 0; }
.cw-back { left: 0; top: 1px; width: 431px; height: 243px; padding: 0 7px; border-radius: 6px 6px 0 0; background: linear-gradient(#bfcddb, #d7e4f2 28px); }
.cw-front { left: 433px; top: 0; width: 486px; height: 244px; padding: 0 6px; background: linear-gradient(#99b4d1, #b9d1ea 28px, #b9d1ea); }
.cw-head { display: flex; align-items: center; gap: 2px; padding-left: 2px; }
.cw-back .cw-head { height: 30px; padding-top: 4px; padding-right: 1px; color: #4a5a6c; }
.cw-front .cw-head { height: 28px; padding-top: 2px; }
.cw-title { flex: 1; margin-left: 3px; }
.cc { display: grid; place-items: center; width: 31px; height: 17px; border: 1px solid #7c8ca8; border-radius: 2px; box-shadow: inset 0 0 0 1px rgba(255, 255, 255, .5); }
.cw-front .cc { background: linear-gradient(#c4d8ee, #a8c0dc 48%, #98b4d4 52%, #b4cce8); }
.cw-front .cc-red { background: linear-gradient(#e8a898, #d88070 48%, #c04830 52%, #d87058); border-color: #5c2020; }

.ct { fill: #fff; font: 9px "Noto Sans", sans-serif; }
.end { text-anchor: end; }
.dark { fill: #000; }
.cs { stroke: #0f0; }
.hollow { fill: #000; }
.solid { fill: #fff; }
.band { fill: none; stroke: #3cb371; }

.tabs-mdi { border-top: 2px solid #000; height: 20px; padding-left: 2px; }
.pager { margin: 6px 4px 0 auto; }

/* Terminal */
.terminal { display: flex; flex: 1; padding: 5px 2px 2px 0; border-bottom: 1px solid #a0a0a0; }
.side { display: flex; flex-direction: column; align-items: center; width: 15px; }
.strip { display: flex; flex: 1; justify-content: center; width: 14px; background: linear-gradient(#d7e4f2, #bfcddb); }
.strip-title { writing-mode: vertical-rl; transform: rotate(180deg); color: #4a5a6c; font-size: 11px; line-height: 14px; padding-top: 3px; }
.term-main { display: flex; flex: 1; flex-direction: column; min-width: 0; border-left: 1px solid #a0a0a0; border-top: 1px solid #a0a0a0; background: #fff; }

.orders { width: 100%; }
.c122 { width: 122px; }
.c170 { width: 170px; }
.c85 { width: 85px; }
.c66 { width: 66px; }
.c94 { width: 94px; }
.orders th { height: 24px; padding: 0 5px; border-bottom: 1px solid #c8c8c8; border-right: 1px solid #e4e4e8; background: linear-gradient(#fff 45%, #f2f4f6); }
.orders td { height: 20px; border-right: 1px solid #c8c8c8; border-bottom: 1px solid #c8c8c8; }
.orders tbody tr:nth-child(even) { background: #ebebeb; }
.orders th:last-child { padding-right: 7px; }
.orders td:last-child { padding-right: 8px; }
.orders td svg { margin: -1px 6px -1px 0; }
.orders td .i8 { margin: 3px 0; }
.orders tbody td:last-child, .orders th:last-child { border-right: 0; }
.orders tfoot td { border: 0; background: #c8c8c8; font-weight: 700; }
.orders tfoot td:last-child { padding-right: 25px; }
.del { width: 11px; height: 14px; margin-left: 6px; color: #999; text-align: right; vertical-align: top; }
.sort { margin-left: 8px; color: #888; font-size: 9px; }

.tabs-term { margin-top: auto; border-top: 1px solid #000; background: #f0f0f0; height: 21px; padding-left: 1px; }

/* Status bar */
.status { display: flex; align-items: flex-end; height: 21px; }
.st { height: 17px; margin-bottom: 1px; padding-left: 5px; border-left: 1px solid #a0a0a0; line-height: 17px; white-space: nowrap; }
.st-help { flex: 1; border: 0; padding-left: 2px; }
.st-prof { width: 116px; }
.st-date { width: 102px; }
.st-val { width: 70px; }
.st-vol { width: 67px; }
.st-net { display: flex; align-items: center; gap: 32px; width: 146px; padding-left: 4px; }
```
